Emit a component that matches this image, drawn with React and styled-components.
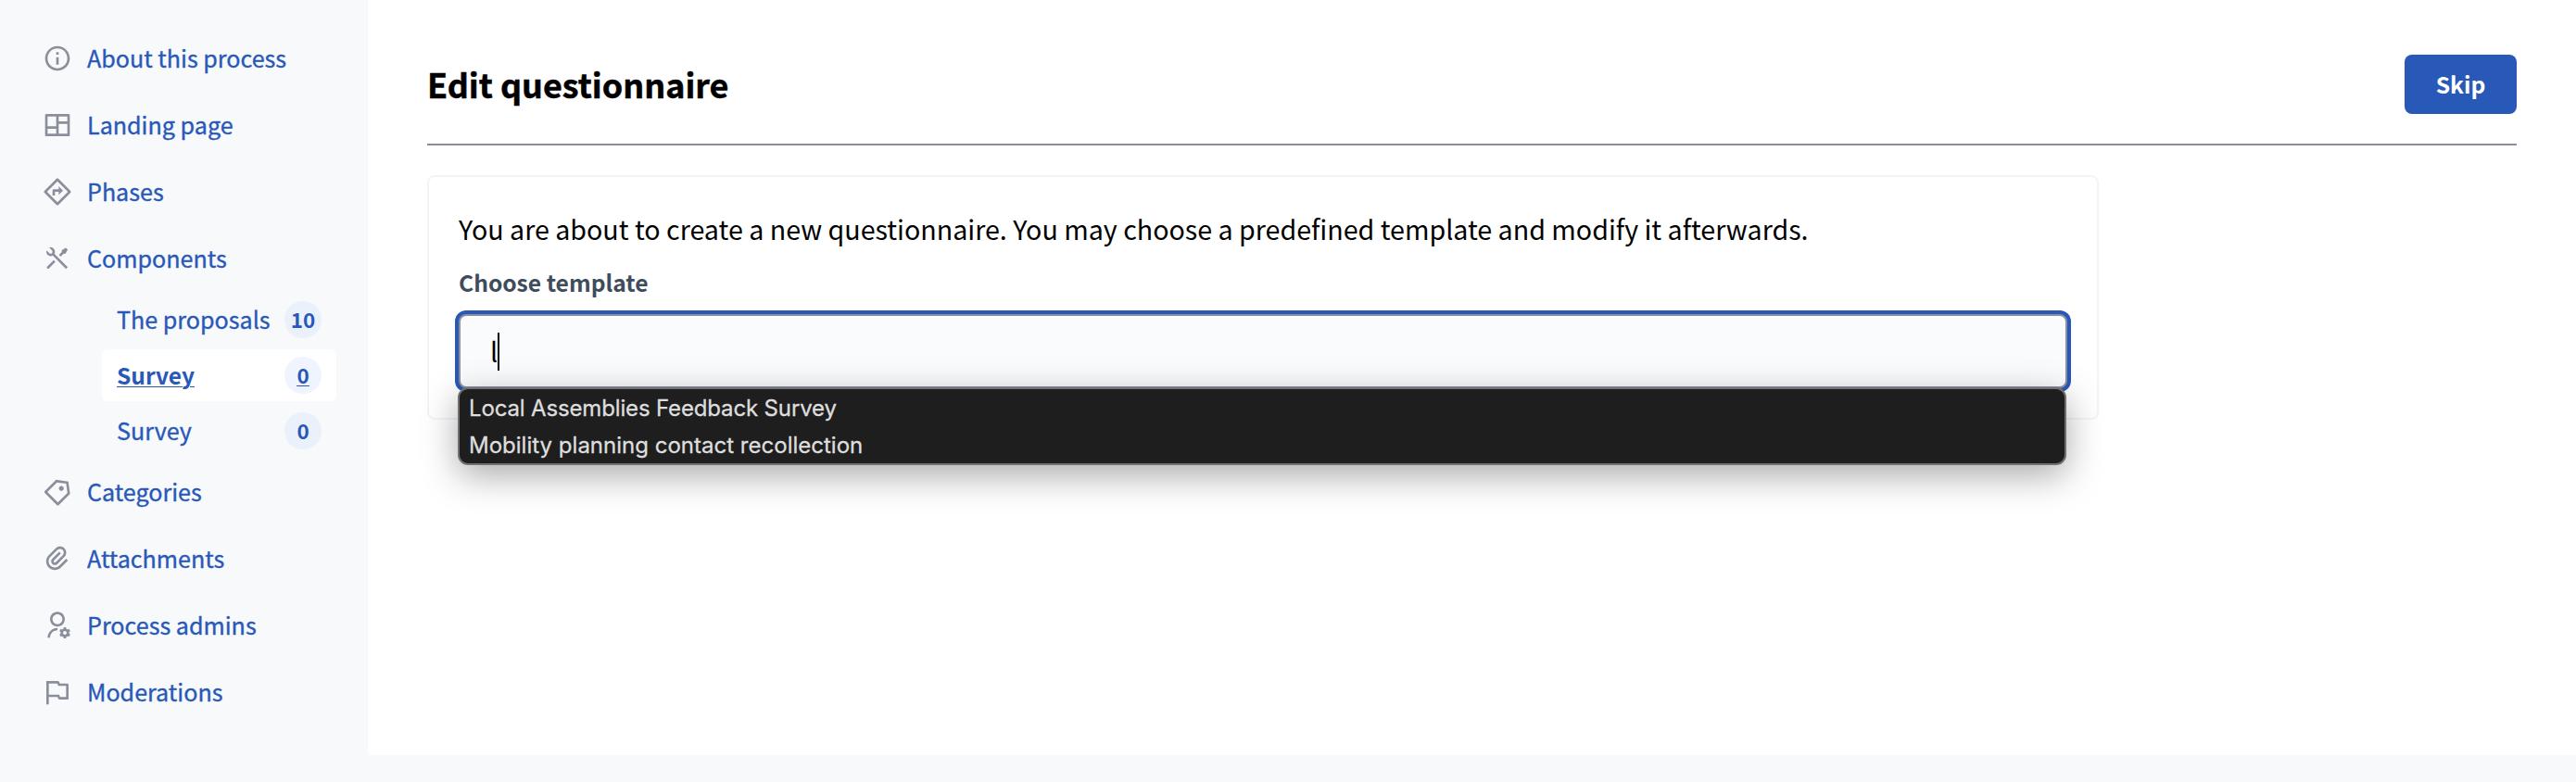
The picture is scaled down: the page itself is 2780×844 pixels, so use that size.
import React from "react";
import styled, { createGlobalStyle, css } from "styled-components";
import {
  RiInformationLine,
  RiLayoutMasonryLine,
  RiDirectionLine,
  RiToolsLine,
  RiPriceTag3Line,
  RiAttachment2,
  RiUserSettingsLine,
  RiFlagLine,
} from "react-icons/ri";

const color = {
  blue: "#2858b8",
  gray: "#8b8f9c",
  panel: "#f7f9fb",
  label: "#3e4c5c",
};

const GlobalStyle = createGlobalStyle`
  *, *::before, *::after { box-sizing: border-box; }
  body {
    margin: 0;
    background: ${color.panel};
    color: #000;
    font-family: "Noto Sans CJK SC", "Source Sans Pro", sans-serif;
  }
`;

const Page = styled.div`
  display: flex;
  height: 844px;
  overflow: hidden;
`;

const Sidebar = styled.nav`
  flex: none;
  width: 397px;
  padding: 27px 34px 0 46px;
`;

const MenuLink = styled.a`
  display: flex;
  align-items: center;
  gap: 16px;
  height: 72px;
  color: ${color.blue};
  font-size: 25.1px;
  line-height: 40px;
  text-decoration: none;

  svg {
    flex: none;
    width: 32px;
    height: 32px;
    color: ${color.gray};
  }
`;

const MenuText = styled.span`
  padding-bottom: 2px;
  -webkit-text-stroke: 0.35px ${color.blue};
`;

const SubMenu = styled.div`
  padding-left: 64px;
`;

const SubItem = styled.div`
  display: flow-root;
  height: 60px;
`;

const SubLink = styled.a`
  display: flex;
  align-items: center;
  justify-content: space-between;
  height: 56px;
  margin: 2px 0;
  padding: 0 16px;
  border-radius: 6px;
  color: ${color.blue};
  font-size: 25.1px;
  line-height: 40px;
  text-decoration: none;
  white-space: nowrap;

  ${(p) =>
    p.$active &&
    css`
      background: #fff;
      font-size: 24.5px;
      font-weight: 700;
      text-decoration: underline;
      text-decoration-thickness: 1px;
      text-underline-offset: 2px;
    `}
`;

const SubText = styled.span`
  padding-bottom: ${(p) => (p.$active ? 0 : 2)}px;
  -webkit-text-stroke: ${(p) => (p.$active ? 0 : "0.35px")} ${color.blue};
`;

const Badge = styled.span`
  display: flex;
  justify-content: center;
  width: 40px;
  height: 40px;
  border-radius: 50%;
  background: ${(p) => (p.$active ? "#f0f4fe" : "#eaf1fb")};
  font-size: 22.4px;
  font-weight: 700;
  line-height: 38px;
  text-decoration: ${(p) => (p.$active ? "underline 1px" : "none")};
  text-underline-offset: 2px;
`;

const Main = styled.main`
  flex: 1;
  height: 815px;
  padding: 59px 64px 0;
  background: #fff;
`;

const Header = styled.header`
  display: flex;
  align-items: center;
  justify-content: space-between;
  padding-bottom: 32px;
  border-bottom: 2px solid ${color.gray};
`;

const Title = styled.h1`
  margin: 0;
  padding-bottom: 3px;
  font-size: 35.9px;
  font-weight: 700;
  line-height: 48px;
  -webkit-text-stroke: 0.5px #000;
`;

const Button = styled.button`
  width: 121px;
  height: 64px;
  padding: 0 0 2px;
  border: 0;
  border-radius: 8px;
  background: ${color.blue};
  color: #fff;
  font: 700 24.7px/40px "Noto Sans CJK SC", sans-serif;
`;

const Card = styled.section`
  width: 80%;
  height: 264px;
  margin-top: 32px;
  padding: 32px;
  border: 2px solid #f3f4f8;
  border-radius: 8px;
`;

const Intro = styled.p`
  margin: 0;
  font-size: 28.63px;
  line-height: 48px;
`;

const Label = styled.label`
  display: block;
  margin: 13px 0 15px;
  color: ${color.label};
  font-size: 24.63px;
  font-weight: 700;
  line-height: 40px;
`;

const Field = styled.div`
  position: relative;
`;

const TextBox = styled.div`
  display: flex;
  align-items: center;
  height: 80px;
  padding: 0 32px;
  border: 2px solid ${color.gray};
  border-radius: 8px;
  background: #fafbfd;
  box-shadow: 0 0 0 4px ${color.blue};
  font-size: 28.63px;
  line-height: 44px;
`;

const Typed = styled.span`
  padding-bottom: 1px;
`;

const Caret = styled.span`
  width: 2px;
  height: 41px;
  background: #000;
`;

const Suggestions = styled.ul`
  position: absolute;
  top: 79px;
  left: -1px;
  right: 1px;
  margin: 0;
  padding: 0;
  border: 2px solid #6e7076;
  border-radius: 11px;
  background: #1e1e1e;
  box-shadow: 0 11px 38px rgba(0, 0, 0, 0.34);
  list-style: none;
`;

const Suggestion = styled.li`
  height: 40px;
  padding: 1px 10px 0;
  color: #dedede;
  font: 400 24px/40px Inter, sans-serif;
  letter-spacing: ${(p) => p.$tracking};
  -webkit-text-stroke: 0.3px #dedede;
`;

const mainLinks = [
  { icon: RiInformationLine, text: "About this process" },
  { icon: RiLayoutMasonryLine, text: "Landing page" },
  { icon: RiDirectionLine, text: "Phases" },
  { icon: RiToolsLine, text: "Components" },
];

const componentLinks = [
  { text: "The proposals", count: 10 },
  { text: "Survey", count: 0, active: true },
  { text: "Survey", count: 0 },
];

const settingLinks = [
  { icon: RiPriceTag3Line, text: "Categories" },
  { icon: RiAttachment2, text: "Attachments" },
  { icon: RiUserSettingsLine, text: "Process admins" },
  { icon: RiFlagLine, text: "Moderations" },
];

function MenuItem({ icon: Icon, text }) {
  return (
    <MenuLink>
      <Icon />
      <MenuText>{text}</MenuText>
    </MenuLink>
  );
}

export default function App() {
  return (
    <>
      <GlobalStyle />
      <Page>
        <Sidebar>
          {mainLinks.map((item) => (
            <MenuItem key={item.text} {...item} />
          ))}
          <SubMenu>
            {componentLinks.map(({ text, count, active }, i) => (
              <SubItem key={i}>
                <SubLink $active={active}>
                  <SubText $active={active}>{text}</SubText>
                  <Badge $active={active}>{count}</Badge>
                </SubLink>
              </SubItem>
            ))}
          </SubMenu>
          {settingLinks.map((item) => (
            <MenuItem key={item.text} {...item} />
          ))}
        </Sidebar>
        <Main>
          <Header>
            <Title>Edit questionnaire</Title>
            <Button type="button">Skip</Button>
          </Header>
          <Card>
            <Intro>
              You are about to create a new questionnaire. You may choose a
              predefined template and modify it afterwards.
            </Intro>
            <Label>Choose template</Label>
            <Field>
              <TextBox>
                <Typed>l</Typed>
                <Caret />
              </TextBox>
              <Suggestions>
                <Suggestion $tracking="-0.15px">
                  Local Assemblies Feedback Survey
                </Suggestion>
                <Suggestion $tracking="0.01px">
                  Mobility planning contact recollection
                </Suggestion>
              </Suggestions>
            </Field>
          </Card>
        </Main>
      </Page>
    </>
  );
}
